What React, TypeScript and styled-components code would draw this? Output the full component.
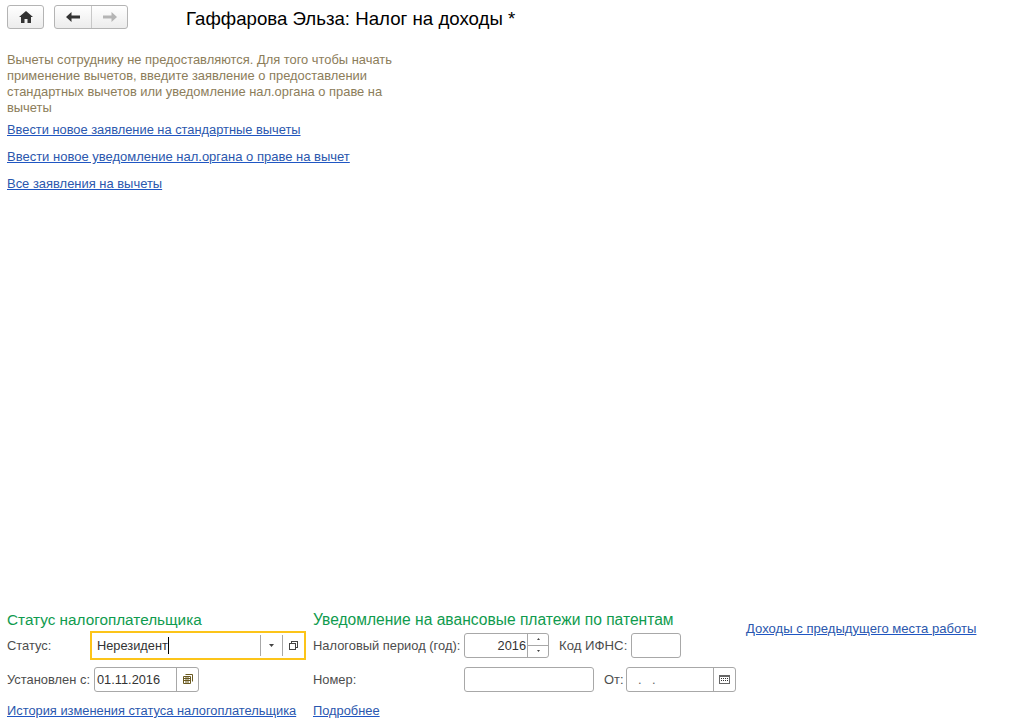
import React from "react";
import styled, { createGlobalStyle } from "styled-components";

const Global = createGlobalStyle`
  html, body { margin: 0; padding: 0; background: #fff; }
  body { font-family: "Liberation Sans", Arial, sans-serif; font-size: 12.9px; color: #4d4d4d; }
`;

const Page = styled.div`
  width: 1010px;
  height: 727px;
  box-sizing: border-box;
  padding: 5px 0 0 7px;
  display: flex;
  flex-direction: column;
  overflow: hidden;
`;

const Toolbar = styled.div`
  display: flex;
  align-items: center;
  height: 24px;
`;

const NavGroup = styled.div<{ $gap: number }>`
  display: flex;
  height: 24px;
  margin-right: ${(p) => p.$gap}px;
  box-sizing: border-box;
  border: 1px solid #b4b4b4;
  border-radius: 3px;
  background: linear-gradient(#ffffff, #ececec);
`;

const NavButton = styled.div<{ $w: number; $divided?: boolean }>`
  width: ${(p) => p.$w}px;
  display: flex;
  align-items: center;
  justify-content: center;
  border-left: ${(p) => (p.$divided ? "1px solid #c8c8c8" : "none")};
`;

const Title = styled.div`
  font-size: 18.67px;
  color: #000;
  line-height: 24px;
  margin-top: 4px;
  margin-left: -1px;
`;

const Info = styled.div`
  margin-top: 23px;
  width: 392px;
  font-size: 12.9px;
  line-height: 16px;
  color: #8c7d5a;
`;

const LinkList = styled.div`
  display: flex;
  flex-direction: column;
  align-items: flex-start;
  gap: 11px;
  margin-top: 6px;
`;

const Link = styled.a<{ $size?: number }>`
  font-size: ${(p) => p.$size ?? 12.85}px;
  line-height: 16px;
  color: #2b57ad;
  text-decoration: underline;
  text-decoration-color: #1f56c4;
  text-underline-offset: 1px;
`;

const Footer = styled.div`
  margin-top: auto;
  display: flex;
  padding-bottom: 2px;
`;

const LeftCol = styled.div`
  width: 306px;
  display: flex;
  flex-direction: column;
`;

const MiddleCol = styled.div`
  width: 433px;
  display: flex;
  flex-direction: column;
`;

const RightCol = styled.div`
  padding-top: 9px;
`;

const Heading = styled.div<{ $size: number }>`
  font-size: ${(p) => p.$size}px;
  line-height: 16px;
  color: #0f9b4e;
  height: 17px;
`;

const FieldRow = styled.div<{ $h: number }>`
  display: flex;
  align-items: center;
  height: ${(p) => p.$h}px;
`;

const Label = styled.span<{ $w: number; $gap?: number; $size?: number }>`
  width: ${(p) => p.$w}px;
  margin-left: ${(p) => p.$gap ?? 0}px;
  font-size: ${(p) => p.$size ?? 12.9}px;
  flex: none;
  white-space: nowrap;
  color: #4d4d4d;
`;

const Field = styled.div<{ $w: number; $focus?: boolean }>`
  box-sizing: border-box;
  width: ${(p) => p.$w}px;
  height: ${(p) => (p.$focus ? 29 : 25)}px;
  display: flex;
  align-items: stretch;
  flex: none;
  border: ${(p) => (p.$focus ? "2px solid #fcc419" : "1px solid #a8a8a8")};
  border-radius: ${(p) => (p.$focus ? 0 : 3)}px;
  background: #fff;
`;

const Value = styled.div<{ $right?: boolean; $focus?: boolean }>`
  flex: 1;
  min-width: 0;
  display: flex;
  align-items: center;
  justify-content: ${(p) => (p.$right ? "flex-end" : "flex-start")};
  padding: 0 ${(p) => (p.$right ? 1 : 3)}px 0 ${(p) => (p.$focus ? 5 : 2)}px;
  font-size: 12.8px;
  color: #333;
`;

const DateMask = styled(Value)`
  padding-left: 11px;
  word-spacing: 7px;
  color: #666;
`;

const Caret = styled.span`
  width: 1px;
  height: 17px;
  background: #000;
`;

const Addon = styled.div<{ $w: number; $inset?: boolean }>`
  width: ${(p) => p.$w}px;
  flex: none;
  display: flex;
  align-items: center;
  justify-content: center;
  border-left: 1px solid #a8a8a8;
  ${(p) => p.$inset && "margin: 2px 0;"}
`;

const Spinner = styled.div`
  width: 20px;
  flex: none;
  display: flex;
  flex-direction: column;
  border-left: 1px solid #a8a8a8;
`;

const SpinPart = styled.div<{ $top?: boolean }>`
  flex: 1;
  display: flex;
  align-items: center;
  justify-content: center;
  border-bottom: ${(p) => (p.$top ? "1px solid #a8a8a8" : "none")};
`;

const Home = () => (
  <svg width="14" height="12" viewBox="0 0 14 12">
    <path d="M7 0 L14 6 L12 6 L12 12 L8.5 12 L8.5 8 L5.5 8 L5.5 12 L2 12 L2 6 L0 6 Z" fill="#333" />
  </svg>
);

const Arrow = ({ color, flip }: { color: string; flip?: boolean }) => (
  <svg width="14" height="10" viewBox="0 0 14 10" style={flip ? { transform: "scaleX(-1)" } : undefined}>
    <path d="M0 5 L5.5 0 L5.5 3.5 L14 3.5 L14 6.5 L5.5 6.5 L5.5 10 Z" fill={color} />
  </svg>
);

const Down = () => (
  <svg width="5" height="3" viewBox="0 0 5 3">
    <path d="M0 0 H5 L2.5 3 Z" fill="#444" />
  </svg>
);

const Tiny = ({ up }: { up?: boolean }) => (
  <svg width="3" height="2" viewBox="0 0 3 2">
    <path d={up ? "M1.5 0 L3 2 H0 Z" : "M0 0 H3 L1.5 2 Z"} fill="#444" />
  </svg>
);

const OpenIcon = () => (
  <svg width="9" height="9" viewBox="0 0 9 9" fill="none" stroke="#444">
    <rect x="2.5" y="0.5" width="6" height="6" />
    <rect x="0.5" y="2.5" width="6" height="6" fill="#fff" />
  </svg>
);

const ListCal = () => (
  <svg width="10" height="10" viewBox="0 0 10 10" fill="none" stroke="#6b5a20">
    <path d="M2.5 .5H9.5V7.5M.5 2.5H7.5V9.5H.5ZM.5 4.5H7.5M.5 6.5H7.5M3 2.5V9.5M5 2.5V9.5" />
  </svg>
);

const Calendar = () => (
  <svg width="11" height="9" viewBox="0 0 11 9">
    <rect x="0.5" y="0.5" width="10" height="8" fill="#fff" stroke="#666" />
    <rect x="1" y="1" width="9" height="1" fill="#666" />
    {[2, 4, 6, 8].map((x) =>
      [3, 5].map((y) => <rect key={`${x}-${y}`} x={x} y={y} width="1" height="1" fill="#333" />)
    )}
  </svg>
);

export default function App() {
  return (
    <Page>
      <Global />
      <Toolbar>
        <NavGroup $gap={10}>
          <NavButton $w={35}>
            <Home />
          </NavButton>
        </NavGroup>
        <NavGroup $gap={59}>
          <NavButton $w={36}>
            <Arrow color="#333" />
          </NavButton>
          <NavButton $w={35} $divided>
            <Arrow color="#b5b5b5" flip />
          </NavButton>
        </NavGroup>
        <Title>Гаффарова Эльза: Налог на доходы *</Title>
      </Toolbar>

      <Info>
        Вычеты сотруднику не предоставляются. Для того чтобы начать применение вычетов, введите заявление о
        предоставлении стандартных вычетов или уведомление нал.органа о праве на вычеты
      </Info>
      <LinkList>
        <Link>Ввести новое заявление на стандартные вычеты</Link>
        <Link $size={13}>Ввести новое уведомление нал.органа о праве на вычет</Link>
        <Link $size={12.95}>Все заявления на вычеты</Link>
      </LinkList>

      <Footer>
        <LeftCol>
          <Heading $size={15.3}>Статус налогоплательщика</Heading>
          <FieldRow $h={32}>
            <Label $w={83}>Статус:</Label>
            <Field $w={216} $focus>
              <Value $focus>
                Нерезидент
                <Caret />
              </Value>
              <Addon $w={21} $inset>
                <Down />
              </Addon>
              <Addon $w={21} $inset>
                <OpenIcon />
              </Addon>
            </Field>
          </FieldRow>
          <FieldRow $h={36}>
            <Label $w={87}>Установлен с:</Label>
            <Field $w={105}>
              <Value>01.11.2016</Value>
              <Addon $w={21}>
                <ListCal />
              </Addon>
            </Field>
          </FieldRow>
          <FieldRow $h={28}>
            <Link>История изменения статуса налогоплательщика</Link>
          </FieldRow>
        </LeftCol>
        <MiddleCol>
          <Heading $size={15.6}>Уведомление на авансовые платежи по патентам</Heading>
          <FieldRow $h={32}>
            <Label $w={151}>Налоговый период (год):</Label>
            <Field $w={85}>
              <Value $right>2016</Value>
              <Spinner>
                <SpinPart $top>
                  <Tiny up />
                </SpinPart>
                <SpinPart>
                  <Tiny />
                </SpinPart>
              </Spinner>
            </Field>
            <Label $w={72} $gap={10} $size={13.2}>
              Код ИФНС:
            </Label>
            <Field $w={50} />
          </FieldRow>
          <FieldRow $h={36}>
            <Label $w={151}>Номер:</Label>
            <Field $w={130} />
            <Label $w={22} $gap={10}>
              От:
            </Label>
            <Field $w={110}>
              <DateMask>. .</DateMask>
              <Addon $w={21}>
                <Calendar />
              </Addon>
            </Field>
          </FieldRow>
          <FieldRow $h={28}>
            <Link>Подробнее</Link>
          </FieldRow>
        </MiddleCol>
        <RightCol>
          <Link $size={13.1}>Доходы с предыдущего места работы</Link>
        </RightCol>
      </Footer>
    </Page>
  );
}
